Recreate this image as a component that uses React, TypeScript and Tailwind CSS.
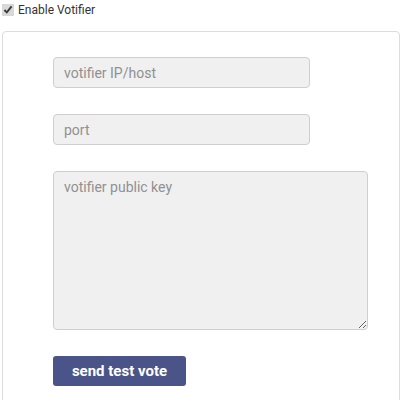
import { useState } from "react";

const App = () => {
  const [enabled, setEnabled] = useState(true);

  return (
    <div className="min-h-[400px] bg-white font-['Roboto',sans-serif]">
      <label className="flex h-[18px] items-center gap-[4px] pl-[2px] pt-[1px] text-[12px] text-[#333]">
        <input
          type="checkbox"
          checked={enabled}
          onChange={(e) => setEnabled(e.target.checked)}
          className="m-0 h-[12px] w-[12px] accent-[#bdbdbd]"
        />
        Enable Votifier
      </label>

      <div className="mx-[2px] mt-[13px] rounded-[4px] border border-[#dcdcdc] pb-6 pl-[50px] pt-[25px]">
        <div className="flex flex-col gap-[26px]">
          <input
            type="text"
            placeholder="votifier IP/host"
            className="h-[31px] w-[257px] rounded-[4px] border border-[#cfcfcf] bg-[#f0f0f0] px-[10px] text-[14px] text-[#555] outline-none placeholder:text-[#909090]"
          />
          <input
            type="text"
            placeholder="port"
            className="h-[31px] w-[257px] rounded-[4px] border border-[#cfcfcf] bg-[#f0f0f0] px-[10px] text-[14px] text-[#555] outline-none placeholder:text-[#909090]"
          />
          <textarea
            placeholder="votifier public key"
            className="h-[159px] w-[315px] rounded-[4px] border border-[#cfcfcf] bg-[#f0f0f0] px-[10px] py-[5px] text-[14px] text-[#555] outline-none placeholder:text-[#909090]"
          />
          <button
            type="button"
            className="h-[30px] w-[133px] rounded-[3px] bg-[#4b5488] text-[15px] font-bold text-white"
          >
            send test vote
          </button>
        </div>
      </div>
    </div>
  );
};

export default App;
